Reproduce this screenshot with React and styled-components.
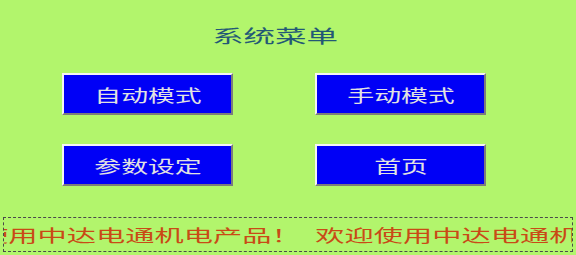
import React from "react";
import styled, { createGlobalStyle } from "styled-components";

const GlobalStyle = createGlobalStyle`
  html, body {
    margin: 0;
    padding: 0;
    background: #b2f56c;
  }
  body {
    font-family: "Noto Sans CJK SC", "Noto Sans", sans-serif;
  }
`;

const Screen = styled.div`
  width: 576px;
  height: 255px;
  background: #b2f56c;
  display: flex;
  flex-direction: column;
  overflow: hidden;
`;

const Title = styled.h1`
  margin: 26px 0 0;
  padding-right: 26px;
  height: 18px;
  font-size: 18px;
  line-height: 18px;
  font-weight: normal;
  color: #235876;
  display: flex;
  justify-content: center;
`;

const Stretch = styled.span`
  display: inline-block;
  flex-shrink: 0;
  white-space: pre;
  transform: scaleX(${(p) => p.$sx});
  transform-origin: ${(p) => p.$origin || "center"};
`;

const Menu = styled.div`
  margin-top: 29px;
  padding-left: 62px;
  display: grid;
  grid-template-columns: 171px 171px;
  grid-auto-rows: 42px;
  column-gap: 82px;
  row-gap: 29px;
`;

const MenuButton = styled.button`
  box-sizing: border-box;
  margin: 0;
  padding: 0;
  height: 42px;
  background: #0000f6;
  border: 2px solid;
  border-color: #f4f4f4 #7c7c7c #7c7c7c #f4f4f4;
  color: #e2e2e2;
  font-family: inherit;
  font-size: 17px;
  line-height: 17px;
  font-weight: normal;
  display: flex;
  align-items: center;
  justify-content: center;
  cursor: pointer;
`;

const Marquee = styled.div`
  box-sizing: border-box;
  margin: 31px 0 0 3px;
  width: 570px;
  height: 35px;
  border: 1px dashed #4a4a4a;
  overflow: hidden;
  display: flex;
  align-items: center;
  color: #c94a16;
  font-size: 17px;
  line-height: 17px;
  font-weight: normal;
`;

const MarqueeText = styled(Stretch)`
  margin-left: -25px;
`;

const items = ["自动模式", "手动模式", "参数设定", "首页"];

export default function App() {
  return (
    <>
      <GlobalStyle />
      <Screen>
        <Title>
          <Stretch $sx={1.75}>系统菜单</Stretch>
        </Title>
        <Menu>
          {items.map((label) => (
            <MenuButton key={label}>
              <Stretch $sx={1.58}>{label}</Stretch>
            </MenuButton>
          ))}
        </Menu>
        <Marquee>
          <MarqueeText $sx={1.72} $origin="left">
            {"使用中达电通机电产品！\u2002欢迎使用中达电通机电产品！"}
          </MarqueeText>
        </Marquee>
      </Screen>
    </>
  );
}
